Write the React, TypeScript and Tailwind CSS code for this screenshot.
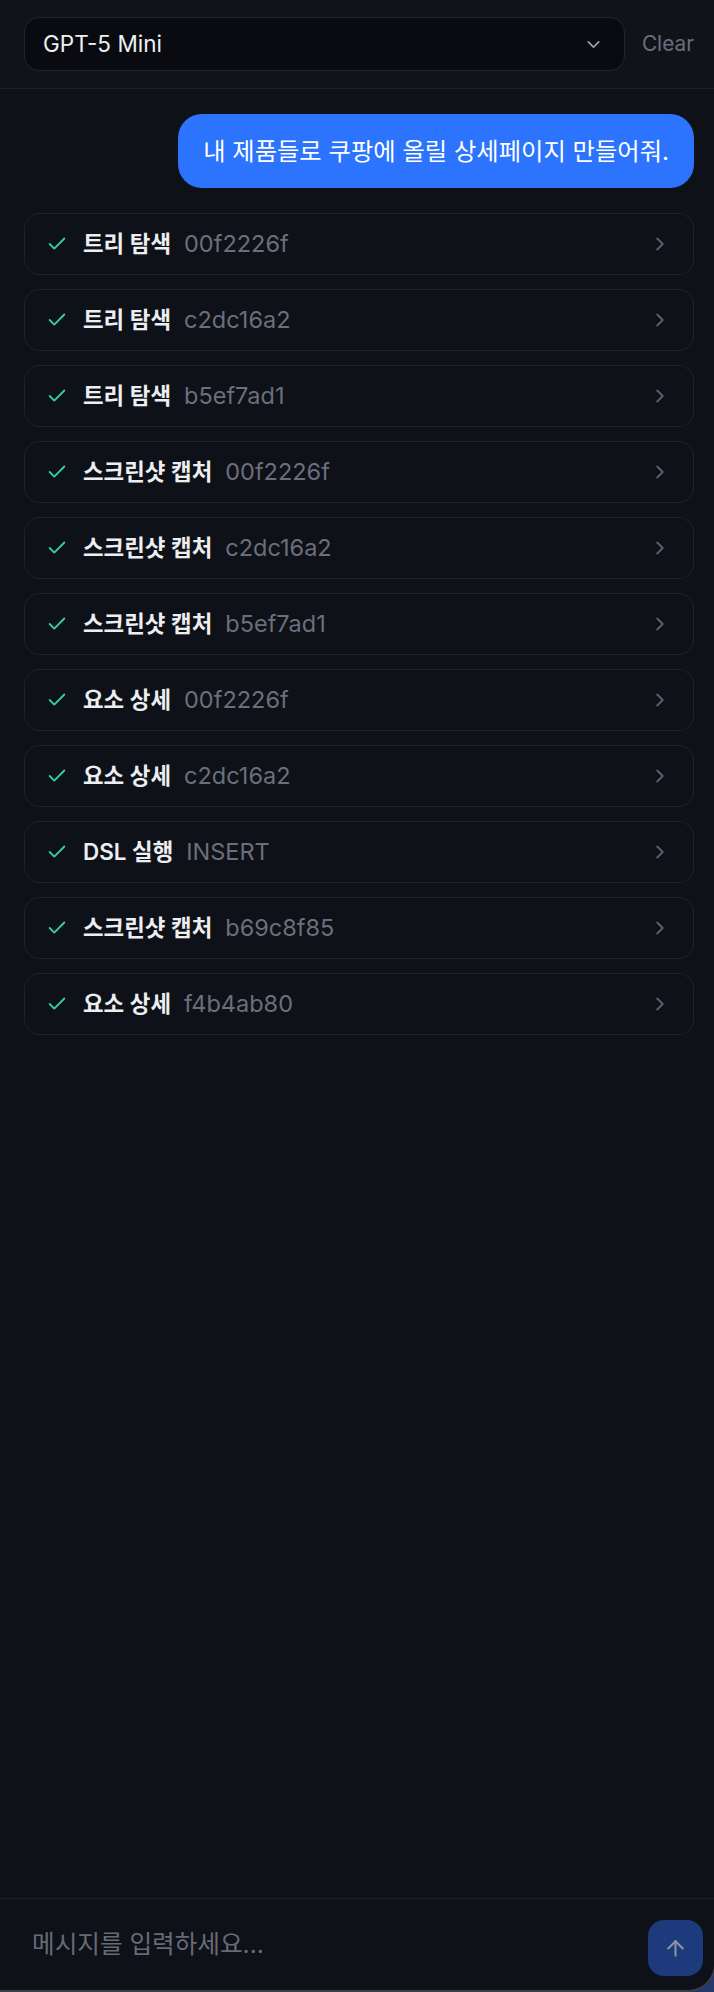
import { Check, ChevronDown, ChevronRight, ArrowUp } from 'lucide-react'

type Step = {
  label: string
  ref: string
}

const STEPS: Step[] = [
  { label: '트리 탐색', ref: '00f2226f' },
  { label: '트리 탐색', ref: 'c2dc16a2' },
  { label: '트리 탐색', ref: 'b5ef7ad1' },
  { label: '스크린샷 캡처', ref: '00f2226f' },
  { label: '스크린샷 캡처', ref: 'c2dc16a2' },
  { label: '스크린샷 캡처', ref: 'b5ef7ad1' },
  { label: '요소 상세', ref: '00f2226f' },
  { label: '요소 상세', ref: 'c2dc16a2' },
  { label: 'DSL 실행', ref: 'INSERT' },
  { label: '스크린샷 캡처', ref: 'b69c8f85' },
  { label: '요소 상세', ref: 'f4b4ab80' },
]

const FONT = "font-['Inter','Noto_Sans_CJK_KR',sans-serif]"

function StepRow({ step }: { step: Step }) {
  return (
    <div className="flex h-[62px] items-center rounded-[15px] border border-[#1f222a] bg-[#0e1117] pl-[21px] pr-[22px]">
      <Check size={22} strokeWidth={2} className="shrink-0 text-[#34d399]" />
      <span className="ml-[15px] text-[22.4px] font-semibold leading-[32px] text-[#eceef2]">{step.label}</span>
      <span className="ml-[13px] text-[23.5px] leading-[32px] text-[#6b6f7c]">{step.ref}</span>
      <ChevronRight size={22} strokeWidth={2} className="ml-auto shrink-0 text-[#5d6170]" />
    </div>
  )
}

export default function App() {
  return (
    <div className={`h-[1992px] w-[714px] overflow-hidden bg-[#24386a] ${FONT}`}>
      <div className="flex h-[1992px] w-[716px] flex-col overflow-hidden rounded-br-[28px] border-b-2 border-r-2 border-[#3a3f4b] bg-[#0e1117]">
        <header className="flex shrink-0 items-center border-b border-[#1d2027] bg-[#111318] pb-[17px] pl-[24px] pr-[20px] pt-[17px]">
          <div className="flex h-[54px] flex-1 items-center rounded-[15px] border border-[#22252d] bg-[#0a0b10] pl-[18px] pr-[20px]">
            <span className="text-[22.5px] text-[#eef0f3]">GPT-5 Mini</span>
            <ChevronDown size={21} strokeWidth={2} className="ml-auto text-[#9a9eab]" />
          </div>
          <button className="ml-[17px] text-[20.8px] text-[#6b6f7c]">Clear</button>
        </header>

        <main className="flex flex-1 flex-col overflow-hidden pl-[24px] pr-[20px] pt-[25px]">
          <div className="flex justify-end">
            <div className="rounded-[24px] bg-[#2c74fd] px-[25px] py-[20px] text-[24.3px] leading-[34px] text-white">
              내 제품들로 쿠팡에 올릴 상세페이지 만들어줘.
            </div>
          </div>
          <div className="mt-[25px] flex flex-col gap-[14px]">
            {STEPS.map((step, i) => (
              <StepRow key={i} step={step} />
            ))}
          </div>
        </main>

        <footer className="flex h-[92px] shrink-0 items-center border-t border-[#1d2027] pl-[32px] pr-[11px]">
          <span className="flex-1 text-[24.6px] text-[#676b78]">메시지를 입력하세요...</span>
          <button className="mt-[7px] flex h-[56px] w-[55px] items-center justify-center rounded-[16px] bg-[#1d3b7c]">
            <ArrowUp size={25} strokeWidth={2} className="text-[#8c93a3]" />
          </button>
        </footer>
      </div>
    </div>
  )
}
